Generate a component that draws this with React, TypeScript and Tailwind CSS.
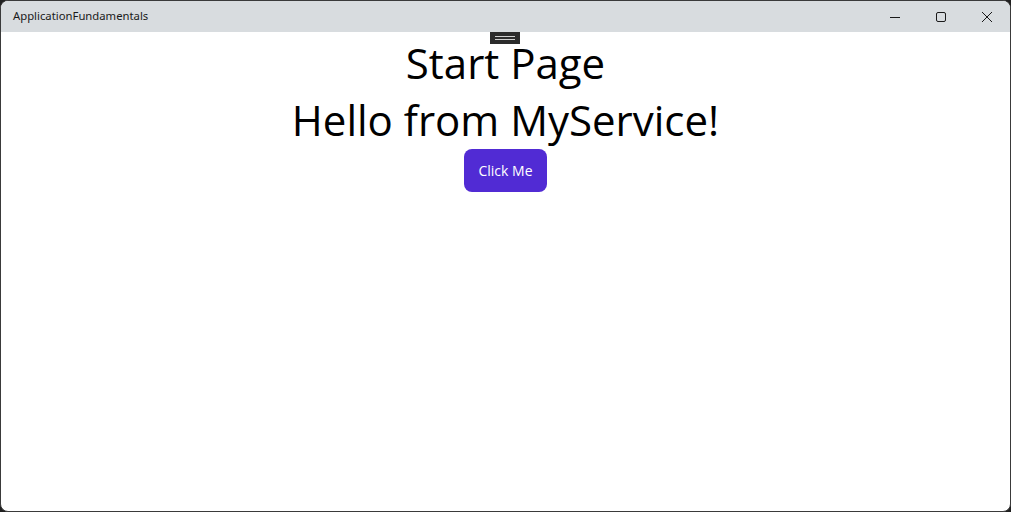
export default function App() {
  return (
    <div className="w-[1011px] h-[512px] bg-[#202020] overflow-hidden" style={{ fontFamily: '"Open Sans", sans-serif' }}>
      <div className="w-full h-full flex flex-col rounded-lg overflow-hidden border border-[#3a3a3a] bg-white">
        <header className="h-[31px] shrink-0 bg-[#d8dcdf] flex items-center justify-between">
          <span className="pl-[12px] text-[11.3px] text-[#1a1a1a]" style={{ fontFamily: '"Noto Sans", sans-serif' }}>ApplicationFundamentals</span>
          <div className="flex h-full">
            <div className="w-[46px] h-full flex items-center justify-center">
              <svg width="10" height="10" viewBox="0 0 10 10"><path d="M0 5.5h10" stroke="#1a1a1a" strokeWidth="1" /></svg>
            </div>
            <div className="w-[46px] h-full flex items-center justify-center">
              <svg width="10" height="10" viewBox="0 0 10 10"><rect x="0.5" y="0.5" width="9" height="9" rx="1.5" fill="none" stroke="#1a1a1a" strokeWidth="1" /></svg>
            </div>
            <div className="w-[46px] h-full flex items-center justify-center">
              <svg width="10" height="10" viewBox="0 0 10 10"><path d="M0 0L10 10M10 0L0 10" stroke="#1a1a1a" strokeWidth="1" /></svg>
            </div>
          </div>
        </header>
        <main className="relative flex-1 flex flex-col items-center">
          <div className="absolute top-0 left-[489px] w-[30px] h-[12px] bg-[#2b2b2b] flex flex-col items-center justify-center gap-[2px]">
            <div className="w-[20px] h-px bg-[#cfcfcf]" />
            <div className="w-[20px] h-px bg-[#cfcfcf]" />
          </div>
          <h1 className="text-[42px] leading-[58px] text-black mt-[2px]">Start Page</h1>
          <h2 className="text-[42px] leading-[56px] text-black">Hello from MyService!</h2>
          <button className="mt-[1px] h-[43px] px-[14px] rounded-lg bg-[#512bd4] text-white text-[14px]">Click Me</button>
        </main>
      </div>
    </div>
  );
}
